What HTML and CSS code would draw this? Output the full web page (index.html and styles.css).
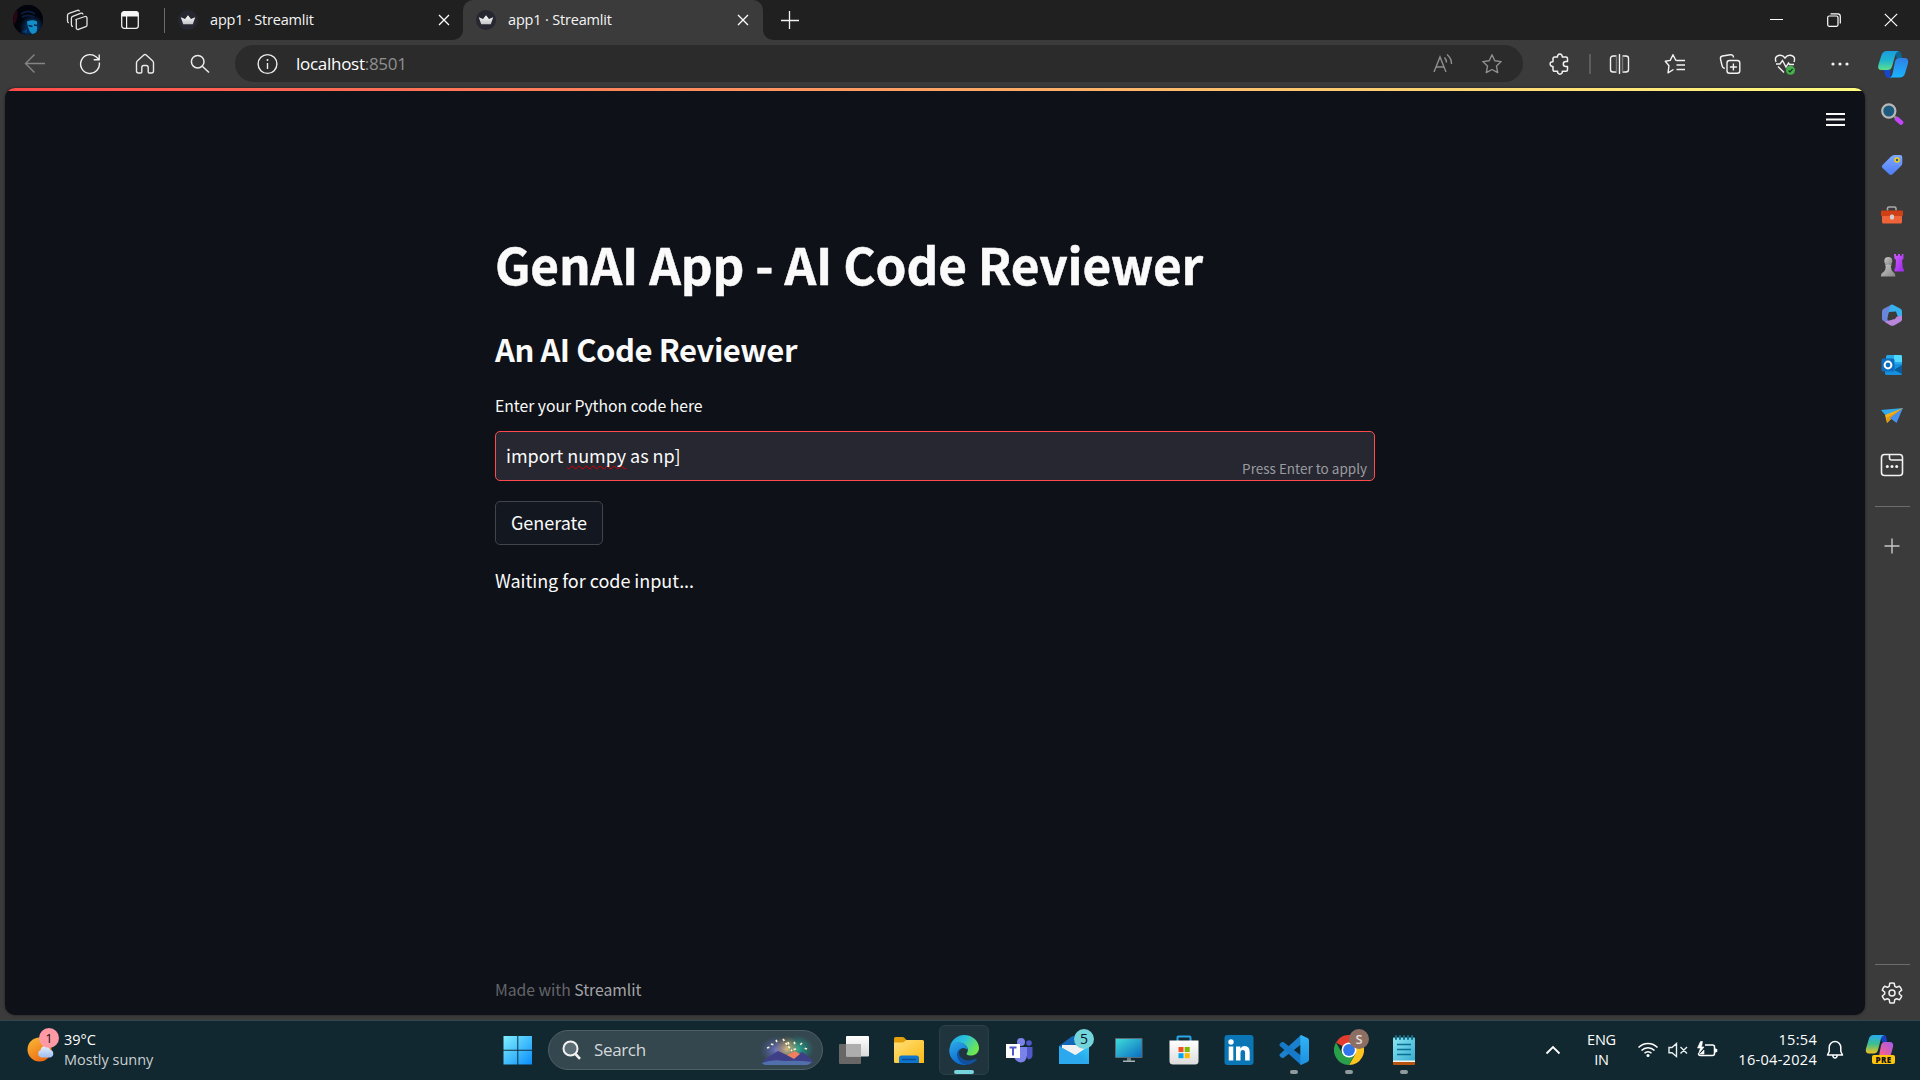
FILE: index.html
```html
<!DOCTYPE html>
<html lang="en">
<head>
<meta charset="utf-8">
<title>app1 · Streamlit</title>
<link rel="stylesheet" href="styles.css">
</head>
<body>
<svg class="defs" width="0" height="0">
  <defs>
    <linearGradient id="gWin" x1="0" y1="0" x2="1" y2="1"><stop offset="0" stop-color="#7ff0ff"/><stop offset="1" stop-color="#0a8dfa"/></linearGradient>
    <linearGradient id="gTeal" x1="0" y1="0" x2="0" y2="1"><stop offset="0" stop-color="#1b9de0"/><stop offset=".5" stop-color="#1fb5cf"/><stop offset="1" stop-color="#5fe08b"/></linearGradient>
    <linearGradient id="gBlue" x1="0" y1="0" x2="0" y2="1"><stop offset="0" stop-color="#2f80e6"/><stop offset="1" stop-color="#19b4ff"/></linearGradient>
    <linearGradient id="gSun" x1="0" y1="0" x2=".6" y2="1"><stop offset="0" stop-color="#f8bc35"/><stop offset="1" stop-color="#ee6c14"/></linearGradient>
    <linearGradient id="gCloud" x1="0" y1="0" x2="0" y2="1"><stop offset="0" stop-color="#e6effc"/><stop offset="1" stop-color="#9dbdf2"/></linearGradient>
    <linearGradient id="gFold" x1="0" y1="0" x2="1" y2="1"><stop offset="0" stop-color="#ffe07a"/><stop offset="1" stop-color="#fcb912"/></linearGradient>
    <linearGradient id="gTask" x1="0" y1="0" x2="0" y2="1"><stop offset="0" stop-color="#ffffff"/><stop offset="1" stop-color="#d9d9d9"/></linearGradient>
    <linearGradient id="gEdgeA" x1="0" y1="0" x2="1" y2=".5"><stop offset="0" stop-color="#1b9ee6"/><stop offset=".5" stop-color="#2cc2da"/><stop offset="1" stop-color="#6ee84e"/></linearGradient>
    <linearGradient id="gEdgeB" x1="0" y1="0" x2=".4" y2="1"><stop offset="0" stop-color="#2ea9ea"/><stop offset="1" stop-color="#0b6bcd"/></linearGradient>
    <linearGradient id="gMon" x1="0" y1="0" x2="1" y2="1"><stop offset="0" stop-color="#3ddcd8"/><stop offset="1" stop-color="#0c6cc4"/></linearGradient>
    <linearGradient id="gMail" x1="1" y1="0" x2="0" y2="1"><stop offset="0" stop-color="#36c6f6"/><stop offset="1" stop-color="#1a8de0"/></linearGradient>
    <linearGradient id="gNote" x1="0" y1="0" x2="1" y2="1"><stop offset="0" stop-color="#8be6f2"/><stop offset="1" stop-color="#35acd0"/></linearGradient>
    <linearGradient id="gStore" x1="0" y1="0" x2="0" y2="1"><stop offset="0" stop-color="#ffffff"/><stop offset="1" stop-color="#dcdcdc"/></linearGradient>
    <linearGradient id="gTag" x1="0" y1="0" x2="0" y2="1"><stop offset="0" stop-color="#7fa8ff"/><stop offset="1" stop-color="#4d7cf5"/></linearGradient>
    <linearGradient id="gPawn" x1="0" y1="0" x2="1" y2="1"><stop offset="0" stop-color="#c9c9c9"/><stop offset="1" stop-color="#858585"/></linearGradient>
    <linearGradient id="gRook" x1="0" y1="0" x2="1" y2="1"><stop offset="0" stop-color="#cf5cff"/><stop offset="1" stop-color="#9b27e8"/></linearGradient>
    <linearGradient id="gCpL" x1="0" y1="0" x2="0" y2="1"><stop offset="0" stop-color="#27a9f2"/><stop offset=".5" stop-color="#3fbf8b"/><stop offset="1" stop-color="#f2c11e"/></linearGradient>
    <linearGradient id="gCpR" x1="1" y1="0" x2="0" y2="1"><stop offset="0" stop-color="#a35bf0"/><stop offset=".6" stop-color="#ee5f98"/><stop offset="1" stop-color="#fb8a5c"/></linearGradient>
    <linearGradient id="gVs" x1="0" y1="0" x2="0" y2="1"><stop offset="0" stop-color="#32b5f6"/><stop offset="1" stop-color="#1d8fe0"/></linearGradient>
    <radialGradient id="gAvatar" cx=".64" cy=".75" r=".42"><stop offset="0" stop-color="#0b5f98"/><stop offset=".5" stop-color="#062a52"/><stop offset="1" stop-color="#02040c"/></radialGradient>
    <radialGradient id="gGlowL"><stop offset="0" stop-color="#6f7ad0" stop-opacity=".9"/><stop offset="1" stop-color="#5560b0" stop-opacity="0"/></radialGradient>
    <radialGradient id="gGlowR"><stop offset="0" stop-color="#23b39c" stop-opacity=".9"/><stop offset="1" stop-color="#1d9a8c" stop-opacity="0"/></radialGradient>
    <radialGradient id="gGlowC"><stop offset="0" stop-color="#f8cf8a" stop-opacity=".8"/><stop offset="1" stop-color="#d99a55" stop-opacity="0"/></radialGradient>
    <linearGradient id="gCrown" x1="0" y1="0" x2="0" y2="1"><stop offset="0" stop-color="#ffffff"/><stop offset="1" stop-color="#c4c4c8"/></linearGradient>
    <symbol id="favicon" viewBox="0 0 20 20"><circle cx="10" cy="10" r="10" fill="#262730"/><path d="M2.800 7.200 7 9l3-3.800L13 9l4.200-1.800-2.400 7H5.200z" fill="url(#gCrown)"/></symbol>
    <symbol id="close" viewBox="0 0 12 12"><path d="M1 1l10 10M11 1 1 11" stroke="#fff" stroke-width="1.300" fill="none"/></symbol>
  </defs>
</svg>

<div class="desktop">
  <header class="tabstrip">
    <div class="strip-left">
      <svg class="avatar" width="30" height="30"><circle cx="15" cy="15" r="15" fill="#03040d"/><circle cx="15" cy="15" r="15" fill="url(#gAvatar)"/><path d="M1 20A15 15 0 0 1 4 5q2 8-3 15z" fill="#3a0718" opacity=".7"/><path d="M8 9q7-5 14 0M9 12q6-3 12 0" stroke="#0a1c3c" stroke-width="2" fill="none"/><path d="M14 16.500q6-2.500 10 0v8q0 4-5 4.500-3-3-4-7z" fill="#128fc8"/><path d="M14 22q2 4 0 7l-5-2q3-2 5-5zM15.500 20.500l4 1M21 20l3 .5" fill="#073f86" stroke="#05284d" stroke-width="1.500"/></svg>
      <svg class="workspaces" width="22" height="22" fill="none" stroke="#e4e4e4" stroke-width="1.300"><path d="M10 10.500 19 7.500a1.500 1.500 0 0 1 2 1.400v7a1.800 1.800 0 0 1-1.200 1.700l-7.300 2.800a1.600 1.600 0 0 1-2.200-1.500v-7.200z"/><path d="M17 5.500A1.600 1.600 0 0 0 15 4.200L6.700 7.400A2 2 0 0 0 5.400 9v6.700q0 1.500 1.500 2"/><path d="M13.500 2.400a1.600 1.600 0 0 0-2-1L3 4.300A2 2 0 0 0 1.500 6.200V12q0 1.500 1.300 2"/></svg>
      <svg class="tab-actions" width="18" height="18"><rect x=".7" y=".7" width="16.600" height="16.600" rx="2.500" fill="none" stroke="#eee" stroke-width="1.300"/><path d="M.5 5.500V3A2.500 2.500 0 0 1 3 .5h12A2.500 2.500 0 0 1 17.500 3v2.500zM5 5h1.200v12.500H5z" fill="#f6f6f6"/></svg>
      <span class="strip-sep"></span>
      <div class="tab"><svg width="20" height="20"><use href="#favicon"/></svg><span class="tab-title">app1 · Streamlit</span><svg width="12" height="12"><use href="#close"/></svg></div>
    </div>
    <div class="tab tab-active"><svg width="20" height="20"><use href="#favicon"/></svg><span class="tab-title">app1 · Streamlit</span><svg width="12" height="12"><use href="#close"/></svg></div>
    <div class="strip-right">
      <svg width="18" height="18"><path d="M8.500 0v18M0 9.500h18" stroke="#f2f2f2" stroke-width="1.300"/></svg>
      <div class="window-buttons">
        <svg width="14" height="14"><path d="M0 6.500h13" stroke="#fff" stroke-width="1"/></svg>
        <svg width="14" height="14" fill="none" stroke="#fff" stroke-width="1.200"><rect x=".7" y="3" width="10.300" height="10.300" rx="1.500"/><path d="M3.500.8h7.200q2.600 0 2.600 2.600v7"/></svg>
        <svg width="14" height="14"><path d="M.8.8l12.400 12.400M13.200.8.8 13.200" stroke="#fff" stroke-width="1.200"/></svg>
      </div>
    </div>
  </header>

  <nav class="toolbar">
    <div class="nav-buttons">
      <svg width="22" height="22" fill="none" stroke="#858585" stroke-width="1.400"><path d="M21 10.500H1.500M10.500 1.500l-9 9 9 9"/></svg>
      <svg width="22" height="22" fill="none" stroke="#f2f2f2" stroke-width="1.400"><path d="M20.300 9.500A9.400 9.400 0 1 1 17 3.800L20 6.500M20.200 1.500v5.200h-5.500"/></svg>
      <svg width="22" height="22" fill="none" stroke="#ececec" stroke-width="1.400"><path d="M2.500 9.800Q2.500 8.500 3.500 7.700L9.800 2q1.200-1 2.400 0l6.300 5.700q1 .8 1 2.100V18a2 2 0 0 1-2 2h-2.300a1 1 0 0 1-1-1v-4.500a2 2 0 0 0-2-2h-2.400a2 2 0 0 0-2 2V19a1 1 0 0 1-1 1H4.500a2 2 0 0 1-2-2z"/></svg>
      <svg width="22" height="22" fill="none" stroke="#ececec" stroke-width="1.500"><circle cx="8.700" cy="8.700" r="6.300"/><path d="M13.300 13.300 20 19.500"/></svg>
    </div>
    <div class="address">
      <svg width="22" height="22"><circle cx="11.500" cy="11" r="9.400" fill="none" stroke="#ececec" stroke-width="1.400"/><path d="M11.500 10v6" stroke="#ececec" stroke-width="1.400"/><circle cx="11.500" cy="7" r="1" fill="#ececec"/></svg>
      <span class="url">localhost<span class="port">:8501</span></span>
      <svg class="read" width="22" height="22" fill="none" stroke="#8f8f8f" stroke-width="1.400"><path d="M2 19 8 4l6 15M4.200 14h7.700M12.500 4.500q2 2.200 2 5M15 1.500q4.700 4 4.500 9.500"/></svg>
      <svg width="22" height="22" fill="none" stroke="#8f8f8f" stroke-width="1.400" stroke-linejoin="round"><path d="m11 1.800 2.800 5.900 6.400.9-4.700 4.500 1.200 6.500L11 16.500l-5.700 3.100 1.200-6.500L1.800 8.600l6.400-.9z"/></svg>
    </div>
    <div class="tools">
      <svg width="22" height="22" fill="none" stroke="#f2f2f2" stroke-width="1.500" stroke-linejoin="round"><path d="M5.500 4h3a2.400 2.400 0 1 1 4.700 0H17a1.500 1.500 0 0 1 1.500 1.500v3h-1.700a2.500 2.500 0 0 0 0 5h1.700v3.300a1.500 1.500 0 0 1-1.500 1.500h-3.700a2.400 2.400 0 1 1-4.700 0h-3A1.500 1.500 0 0 1 4 16.800v-3.400a2.400 2.400 0 1 1 0-4.700V5.500A1.500 1.500 0 0 1 5.500 4z"/></svg>
      <span class="tool-sep"></span>
      <svg width="22" height="22" fill="none" stroke="#f2f2f2" stroke-width="1.400"><path d="M10.500 1v20M7.500 3H4A2.500 2.500 0 0 0 1.500 5.500v11A2.500 2.500 0 0 0 4 19h3.500M13.500 3H17a2.500 2.500 0 0 1 2.500 2.500v11A2.500 2.500 0 0 1 17 19h-3.500"/><path d="M7.500 3v16M13.500 3v16" stroke="#777"/></svg>
      <svg width="22" height="22" fill="none" stroke="#f2f2f2" stroke-width="1.400" stroke-linejoin="round"><path d="M13 7.500 11.800 7.300 9 1.700 6.200 7.400 1.300 8.300 5 12.700 4 19.800 9.500 16.500M13 7.500h8M12.500 12H21M12.500 16.500H21"/></svg>
      <svg width="22" height="22" fill="none" stroke="#f2f2f2" stroke-width="1.400"><rect x="8" y="7.500" width="12.800" height="12.800" rx="2.500"/><path d="M14.400 10.500v7M10.900 14h7M14.500 4.500q-.2-3-3.200-2.700L3.500 3Q1 3.600 1.500 6l1.500 6.500q.5 2.500 2.800 3"/></svg>
      <svg width="22" height="22" fill="none" stroke="#f2f2f2" stroke-width="1.400"><path d="M2 9Q.2 3.500 4.500 2.500 8.500 1.500 11 5q2.500-3.500 6.500-2.500Q21.800 3.500 20 9M2 11h4l2.500-3.500L12 14l2.500-4 1 1.500H20M4 13.500l6 6"/><circle cx="16.500" cy="17.300" r="4.500" fill="#45b04c" stroke="none"/><path d="m14.500 17.500 1.500 1.400 2.600-3" stroke="#12351a" stroke-width="1.200"/></svg>
      <svg width="22" height="22" fill="#f2f2f2"><circle cx="4" cy="11" r="1.600"/><circle cx="11" cy="11" r="1.600"/><circle cx="18" cy="11" r="1.600"/></svg>
    </div>
    <svg class="copilot" width="32" height="30"><path d="M18 2h3q2.500 0 3.200 3l1 4h-5.500z" fill="#0c6690"/><path d="M9 21l3.500 7.500h3q-4-3-3-7.500z" fill="#1838c0"/><path d="M13 28.500h-2Q8.500 28.500 8 25.500L7 21h6.500z" fill="#1846d0"/><path d="M10 2h12.500q-3 0-4 3.500L15 17.500q-1 3.500-4.500 3.500H4.500Q0 21 1.500 15.500L4.500 6Q6 2 10 2z" fill="url(#gTeal)"/><path d="M22 9h5.500q4.500 0 3.500 5.500L28 24.500q-1.300 4-5.500 4H11.500q3 0 4-3.500L18 12.500Q18.900 9 22 9z" fill="url(#gBlue)"/></svg>
  </nav>

  <div class="workspace">
    <main class="page">
      <div class="page-menu"><svg width="19" height="15" stroke="#fafafa" stroke-width="2"><path d="M0 2h19M0 7.500h19M0 13h19"/></svg></div>
      <section class="content">
        <h1>GenAI App - AI Code Reviewer</h1>
        <h2>An AI Code Reviewer</h2>
        <label class="field-label">Enter your Python code here</label>
        <div class="field"><span class="field-text">import <span class="typo">numpy</span> as np]</span><span class="hint">Press Enter to apply</span></div>
        <button class="generate" type="button">Generate</button>
        <p class="status">Waiting for code input...</p>
      </section>
      <footer class="made">Made with <a>Streamlit</a></footer>
    </main>
    <aside class="sidebar">
      <svg width="24" height="24"><path d="m17 17 4 3.500" stroke="#c545fa" stroke-width="4.600" stroke-linecap="round"/><path d="m14 14 2 2" stroke="#888" stroke-width="2.500"/><circle cx="8.800" cy="9" r="6.600" fill="#1c5b7d" stroke="#b7b7b7" stroke-width="2.200"/></svg>
      <svg width="24" height="24"><path d="M11 4.500Q12.500 3 14.500 3H20a2.300 2.300 0 0 1 2.300 2.300V11q0 2-1.500 3.300l-8.300 8q-1.700 1.600-3.300 0L2.500 16Q1 14.300 2.500 13z" fill="url(#gTag)"/><circle cx="17" cy="8" r="2" fill="#2854a8" stroke="#ffd000" stroke-width="1.500"/></svg>
      <svg width="24" height="24"><path d="M7.500 8.500v-2q0-1.500 1.500-1.500h5.500q1.500 0 1.500 1.500v2" fill="none" stroke="#aaa" stroke-width="1.600"/><rect x="1" y="8.500" width="22" height="5.500" rx="1" fill="#cf4016"/><path d="M2 14h20v6a1.500 1.500 0 0 1-1.500 1.500h-17A1.500 1.500 0 0 1 2 20z" fill="#ef6339"/><rect x="10" y="12.500" width="4" height="5" rx="1.500" fill="#d0d0d0"/></svg>
      <svg width="24" height="24"><path d="M14 1h2v1.800h2V1h2v1.800h1.800V1H23.500v5L22 7l.8 8 1.200 1.500v2h-9.500V16l1-1.500.5-7.500-1.500-1.500z" fill="url(#gRook)"/><circle cx="8.300" cy="8" r="4" fill="url(#gPawn)"/><path d="M4.800 11.500h7l-1 2q.5 4 2.200 5.500 2.500 1 2.300 4.500H1q-.2-3.500 2.600-4.500 2-1.500 2.200-5.500z" fill="url(#gPawn)"/></svg>
      <svg width="24" height="24"><path d="M11.500 1.800 4 5.500Q2 6.500 2 8.500v7.200q0 2 1.800 2.300l4.700.5q-1.500-1-1-3.500l2-8z" fill="#6a86da"/><path d="M10.500 2q1.500-.8 3 0l7 3.800Q22 6.600 22 8.300V16l-4.500-3-1.500-4.500L8.500 9z" fill="#37b0ee"/><path d="M22 12.500v4q0 1.500-1.500 2.300L14 22.400q-1.700.9-3.500 0L4 18.500l7.500-1.500 5.500-3.500z" fill="#ba86dc"/><path d="M9.800 9h5l2.400 3.700-2.400 3.600h-5L7.800 12.700z" fill="#3b3b3b"/></svg>
      <svg width="24" height="24"><rect x="6" y="2" width="16" height="14" rx="1.500" fill="#28a8e8"/><path d="M14 2h6.500A1.500 1.500 0 0 1 22 3.500V9h-8z" fill="#50d9ff"/><path d="M5 11h17v9.500a1.500 1.500 0 0 1-1.500 1.500h-14A1.500 1.500 0 0 1 5 20.500z" fill="#1490df"/><path d="m22 12-8 5 8 4z" fill="#0a5b9a"/><rect x="1.500" y="5.500" width="13" height="13" rx="1.500" fill="#0f6cbd"/><circle cx="8" cy="12" r="3.400" fill="none" stroke="#fff" stroke-width="2"/></svg>
      <svg width="24" height="24"><path d="M1 7 23 5 7 14z" fill="#32a8ec"/><path d="M23 5 5 12l2 8 4-4z" fill="#f4b01c"/><path d="M23 5 11 16l-4 4-.5-5z" fill="#e09a12"/><path d="m23 5-13 10 6.500 5z" fill="#4590f0"/></svg>
      <svg width="24" height="24" fill="none" stroke="#f2f2f2" stroke-width="1.600"><rect x="1.500" y="1.500" width="21" height="21" rx="3"/><path d="M9.500 2v3a2 2 0 0 0 2 2H22"/><g fill="#f2f2f2" stroke="none"><circle cx="7.300" cy="13.500" r="1.500"/><circle cx="12" cy="13.500" r="1.500"/><circle cx="16.700" cy="13.500" r="1.500"/></g></svg>
      <span class="side-line"></span>
      <svg class="side-add" width="16" height="16"><path d="M8 .5v15M.5 8h15" stroke="#c8c8c8" stroke-width="1.400"/></svg>
      <span class="side-line side-line-low"></span>
      <svg class="side-gear" width="24" height="24" fill="none" stroke="#f2f2f2" stroke-width="1.500" stroke-linejoin="round"><path d="M9.800 2.200q2.200-.5 4.400 0l.6 3.100 1.700 1 3-1q1.600 1.700 2.200 3.800L19.300 11v2l2.400 2q-.6 2.100-2.200 3.700l-3-1-1.700 1-.6 3.100q-2.200.5-4.400 0l-.6-3.100-1.700-1-3 1Q2.900 17 2.300 15l2.400-2v-2L2.300 9.100q.6-2.100 2.200-3.800l3 1 1.700-1z"/><circle cx="12" cy="12" r="3"/></svg>
    </aside>
  </div>

  <div class="taskbar">
    <div class="weather">
      <span class="weather-icon"><svg width="29" height="26"><circle cx="12.500" cy="12.500" r="12" fill="url(#gSun)"/><path d="M14 20.500a4 4 0 0 1-.5-7.500q.8-4 5-4 3.700 0 4.700 3.800a4 4 0 0 1 .3 7.700z" fill="url(#gCloud)"/></svg><span class="weather-badge">1</span></span>
      <span class="weather-text"><span>39°C</span><span class="dim">Mostly sunny</span></span>
    </div>
    <div class="apps">
      <span class="app"><svg width="30" height="30" fill="url(#gWin)"><path d="M.5 1h28.500v28.500H.5z"/><path d="M14.300 0h1v30h-1zM0 14.800h30v1H0z" fill="#12303a"/></svg></span>
      <div class="search">
        <svg width="20" height="20" fill="#5b6c74" stroke="#f2f2f2" stroke-width="2"><circle cx="8.500" cy="8.500" r="7"/><path d="m13.500 14 4.500 4.800" stroke-width="2.600"/></svg>
        <span>Search</span>
        <svg class="search-art" width="54" height="32"><ellipse cx="16" cy="16" rx="16" ry="14" fill="url(#gGlowL)"/><ellipse cx="38" cy="15" rx="16" ry="14" fill="url(#gGlowR)"/><ellipse cx="27" cy="15" rx="13" ry="13" fill="url(#gGlowC)"/><path d="M2 29q1-3 5-5l11-7 15 7 9-6 8 6q3 2 3 5z" fill="#3e3f87"/><path d="m27 21 7 4 6-5-5-3z" fill="#ee8060"/><path d="M2 29q10-4 22-2 15-1 28 1-3 3-5 3H6q-3 0-4-2z" fill="#5170ab"/><path d="m23 5 2 3 3 4 4 5M7 14l3-1M11 10l3 1M16 6l1 2M34 8l1 2M42 9l-2 2M47 15l-3-1M36 15l-4 1M28 8l1 3" stroke="#fff3cf" stroke-width="1.700" stroke-dasharray="2.500 2"/></svg>
      </div>
      <span class="app"><svg width="30" height="28"><rect x="0" y="8" width="22" height="20" rx="1" fill="#676767"/><rect x="7" y="0" width="23" height="20.500" rx="1" fill="url(#gTask)"/><path d="M7 8h15v12.500H8q-1 0-1-1z" fill="#adadad"/></svg></span>
      <span class="app"><svg width="30" height="28"><path d="M0 2.500Q0 1 1.500 1h7q1 0 1.800.8L13 4.500V9H0z" fill="#e3a00a"/><path d="M0 6.500h9l3.500-2.500H28.500A1.500 1.500 0 0 1 30 5.500V27H1.500A1.500 1.500 0 0 1 0 25.500z" fill="url(#gFold)"/><path d="M5 27V22q0-2.500 2.500-2.500h15Q25 19.500 25 22v5z" fill="#0f76cf"/><path d="M8.500 23.500h13" stroke="#0a4c91" stroke-width="1.400" stroke-linecap="round"/></svg></span>
      <span class="app app-current"><svg width="30" height="30"><path d="M.8 13A14.500 14.500 0 0 1 15 0c9 0 15 6.500 15 13 0 5-4 7.500-8 7.500s-5-1.500-4-2.800q1.200-1.500.8-3.500C18 10 13 7 8.500 7.500Q3 8.500.8 13z" fill="url(#gEdgeA)"/><path d="M.3 15C.8 9 6 6.500 10 7.200c5 .6 8.800 4 8.600 7.500q-5-3.500-8.300.5C7 20 10 27 18 29.700Q9.500 31 4 25 0 20.500.3 15z" fill="url(#gEdgeB)"/><path d="M12 13.500Q8 18 12 22.500q5 5 14 1.500 2-.8 2 .4C25 28.500 19 30.500 15 29.300 9 27 6.500 20 9 16q1.300-2 3-2.500z" fill="#11509c"/></svg><i class="run run-wide"></i></span>
      <span class="app"><svg width="28" height="26"><circle cx="16" cy="5" r="4" fill="#7b83eb"/><circle cx="24" cy="6" r="2.800" fill="#5059c9"/><path d="M18 10h9.500v8q0 4-4.500 4.500z" fill="#5059c9"/><path d="M9 10h13v8.500Q21.500 25 15.500 25.500 11 25 9 20z" fill="#7b83eb"/><rect x="1" y="7" width="14" height="14" fill="#fff"/><path d="M4.500 10.500h7M8 10.500v8" stroke="#5059c9" stroke-width="2"/></svg></span>
      <span class="app"><svg width="30" height="28"><path d="m0 10 12-9q3-2 6 0l12 9v5H0z" fill="#1466b8"/><path d="M3 9h24v9l-12 5L3 18z" fill="#f1f1f1"/><path d="m30 10-15 10L0 28h30z" fill="url(#gMail)"/><path d="m0 10 18 10 12 8H0z" fill="#2ba8ee"/></svg><b class="badge badge-mail">5</b></span>
      <span class="app"><svg width="28" height="26"><rect x="0" y="1" width="27.500" height="20" rx="1" fill="#596e77"/><rect x="1" y="2" width="25.500" height="18" fill="url(#gMon)"/><path d="M12 21h4v3h-4z" fill="#6d7a80"/><path d="M8 23.500h12V25H8z" fill="#a9b1b5"/></svg></span>
      <span class="app"><svg width="30" height="30"><path d="M8.500 7V2.500Q8.500 1.500 9.500 1.500h11q1 0 1 1V7" fill="none" stroke="#28a8ea" stroke-width="1.900"/><path d="M.5 5.500h29V26q0 3.500-3.500 3.500H4Q.5 29.500.5 26z" fill="url(#gStore)"/><path d="M9.500 12h5v5h-5z" fill="#f25022"/><path d="M15.700 12h5v5h-5z" fill="#7fba00"/><path d="M9.500 18.200h5v5h-5z" fill="#00a4ef"/><path d="M15.700 18.200h5v5h-5z" fill="#ffb900"/></svg></span>
      <span class="app"><svg width="30" height="30"><rect x=".5" width="29" height="30" rx="3" fill="#0a76b5"/><circle cx="7" cy="7" r="2.700" fill="#fff"/><path d="M4.700 11.500h4.600v14H4.700zM12 11.500h4.400v2q1.500-2.400 4.300-2.400 5 0 5 6.100v8.300h-4.600v-7.300q0-3.100-2.200-3.100-2.400 0-2.400 3.200v7.200H12z" fill="#fff"/></svg></span>
      <span class="app"><svg width="30" height="30"><path d="M22 0 1.500 18.500q-2 1.500-.3 3l1.300 1.200q1 .8 2.200 0L24 8z" fill="#1b80cd"/><path d="M22 30 1.500 11.500q-2-1.500-.3-3L2.500 7.300q1-.8 2.200 0L24 22z" fill="#177ac8"/><path d="m22 0 6.500 3Q30 3.800 30 5.500v19q0 1.700-1.500 2.500L22 30q-.7-.2-.7-1.500v-27Q21.300.3 22 0z" fill="url(#gVs)"/></svg><i class="run"></i></span>
      <span class="app"><svg width="30" height="30"><path d="M15 15 2 7.500A15 15 0 0 1 28 7.500H15z" fill="#e33b2e"/><path d="M28 7.500A15 15 0 0 1 15 30l6.500-11.200L21 7.500z" fill="#fdc420"/><path d="M15 30A15 15 0 0 1 2 7.500l6.500 11.200h13z" fill="#2a9f49"/><circle cx="15" cy="15" r="7.500" fill="#fff"/><circle cx="15" cy="15" r="5.900" fill="#2f75ec"/></svg><b class="badge badge-chrome">S</b><i class="run"></i></span>
      <span class="app"><svg width="24" height="30"><path d="M1 3.500q0-1 1-1h20q1 0 1 1V27H1z" fill="url(#gNote)"/><path d="M1 25.500h22V27H1z" fill="#f3f3f3"/><path d="M1 27h22v2q0 1-1 1H2q-1 0-1-1z" fill="#b4540f"/><path d="M5 9.500h14M5 14.500h14M5 19.500h14" stroke="#0b6f92" stroke-width="1.700"/><path d="M4 1v3M8 1v3M12 1v3M16 1v3M20 1v3" stroke="#136d87" stroke-width="2" stroke-linecap="round"/></svg><i class="run"></i></span>
    </div>
    <div class="tray">
      <svg width="16" height="10"><path d="m1.500 8.500 6.500-6.500 6.500 6.500" fill="none" stroke="#fff" stroke-width="1.800"/></svg>
      <span class="lang"><span>ENG</span><span>IN</span></span>
      <svg class="wifi" width="22" height="18" fill="none" stroke="#fff" stroke-width="1.500"><path d="M1.500 6.500a13.200 13.200 0 0 1 19 0M4.500 9.500a9 9 0 0 1 13 0M7.500 12.300a5 5 0 0 1 7 0"/><circle cx="11" cy="14.500" r="1.500" fill="#fff" stroke="none"/></svg>
      <svg class="vol" width="20" height="16" fill="none" stroke="#e9eef0" stroke-width="1.400"><path d="M1 5.500h3L8.500 1.500v13L4 10.800H1zM12.500 5l6.500 6.500M19 5l-6.500 6.500"/></svg>
      <svg class="bat" width="22" height="18" fill="none" stroke="#fff" stroke-width="1.500"><path d="M9 4h7.500q2 0 2 2v6.500q0 2-2 2h-12q-2 0-2-2"/><path d="M19.500 7.500v4M20.500 8v3"/><path d="M4.500.5 1.500 7h3L2.500 13l5.500-7H5.500L6.500.5zM4 13l4-4v4z" fill="#fff" stroke-width=".6"/></svg>
      <span class="clock"><span>15:54</span><span>16-04-2024</span></span>
      <svg class="bell" width="18" height="20" fill="none" stroke="#fff" stroke-width="1.500" stroke-linejoin="round"><path d="M9 1.500a5.800 5.800 0 0 1 5.800 5.800v4.200l1.700 3.500H1.500l1.700-3.500V7.300A5.800 5.800 0 0 1 9 1.500zM6.800 15.500q.3 2.500 2.200 2.500t2.200-2.500"/></svg>
      <span class="pre"><svg width="30" height="26"><path d="M15 0h3.500Q21 0 21.500 3l.7 4h-5z" fill="#1a3fc0"/><path d="M8.500 0H20q-3 0-4 3.500L13 15q-1 3.500-4.500 3.500H4Q0 18.500 1 13.500L4 3.500Q5 0 8.500 0z" fill="url(#gCpL)"/><path d="M19.500 7h5q4.500 0 3.500 5l-2.500 9q-1 4-5 4H9.500q3.500 0 4.500-4l2-10.500Q16.800 7 19.500 7z" fill="url(#gCpR)"/></svg><em>PRE</em></span>
    </div>
  </div>
</div>
</body>
</html>
```
FILE: styles.css
```css
* { box-sizing: border-box; }
body { margin: 0; overflow: hidden; background: #3b3b3b; color: #fff; font-family: "Open Sans", "Noto Sans", sans-serif; }
svg { display: block; flex: none; }
.defs { position: absolute; }
.desktop { width: 1920px; height: 1080px; display: flex; flex-direction: column; }

/* tab strip */
.tabstrip { flex: none; height: 40px; display: flex; background: linear-gradient(#202020 50%, #3b3b3b 50%); }
.strip-left { width: 463px; display: flex; align-items: center; background: #202020; border-bottom-right-radius: 10px; padding-left: 13px; }
.workspaces { margin-left: 23px; }
.tab-actions { margin-left: 33px; }
.strip-sep { width: 1px; height: 25px; margin-left: 25px; background: #6b6b6b; }
.tab { display: flex; align-items: center; flex: 1; padding: 0 13px; }
.tab-title { flex: 1; margin-left: 12px; font-size: 14.5px; line-height: 20px; letter-spacing: -.18px; color: #f4f4f4; white-space: nowrap; }
.tab-active { flex: none; width: 300px; padding: 0 14px 0 13px; background: #3b3b3b; border-radius: 10px 10px 0 0; }
.strip-right { flex: 1; display: flex; justify-content: space-between; align-items: center; background: #202020; border-bottom-left-radius: 10px; padding: 0 22px 0 18px; }
.window-buttons { display: flex; gap: 43px; }

/* toolbar */
.toolbar { flex: none; height: 48px; display: flex; align-items: center; }
.nav-buttons { display: flex; gap: 33px; padding-left: 24px; width: 235px; }
.address { width: 1288px; height: 37px; margin-bottom: 1px; border-radius: 19px; background: #2b2b2b; display: flex; align-items: center; padding: 0 20px 0 21px; }
.url { flex: 1; margin-left: 18px; font-size: 17px; line-height: 24px; letter-spacing: -.28px; }
.port { color: #8f8f8f; }
.read { margin-right: 27px; }
.tools { display: flex; align-items: center; gap: 33px; margin-left: 26px; }
.tool-sep { width: 2px; height: 20px; margin: 0 -15px 0 -15px; background: #5d5d5d; }
.copilot { margin-left: 26px; }

/* workspace */
.workspace { flex: none; height: 932px; display: flex; padding: 0 0 5px 5px; }
.page { width: 1860px; height: 927px; border-radius: 10px; overflow: hidden; background: #0e1117; display: flex; flex-direction: column; box-shadow: 0 0 3px #0007; font-family: "Noto Sans CJK SC", "Noto Sans CJK JP", sans-serif; color: #fafafa; }
.page::before { content: ""; height: 3px; background: linear-gradient(90deg, #ff4b4b, #fffd80); flex: none; }
.page-menu { flex: none; height: 57px; padding: 21px 20px 0; display: flex; justify-content: flex-end; }
.content { width: 880px; margin-left: 490px; display: flex; flex-direction: column; align-items: flex-start; }
h1 { margin: 83px 0 0; font-size: 49.5px; line-height: 66px; letter-spacing: -.17px; font-weight: 700; white-space: nowrap; -webkit-text-stroke: .5px #fafafa; }
h2 { margin: 31px 0 0; font-size: 31px; line-height: 42px; letter-spacing: -.45px; font-weight: 700; }
.field-label { margin-top: 22px; font-size: 15.75px; line-height: 28px; letter-spacing: -.03px; }
.field { width: 880px; height: 50px; margin-top: 11px; border: 1px solid #ff4b4b; border-radius: 5px; background: #262730; display: flex; justify-content: space-between; padding: 0 7px 0 10px; }
.field-text { font-size: 18px; line-height: 47px; letter-spacing: -.04px; white-space: pre; }
.typo { text-decoration: underline wavy #d60000 1px; text-underline-offset: 2px; text-decoration-skip-ink: none; }
.hint { align-self: flex-end; font-size: 13.5px; line-height: 23px; color: #9a9ba0; }
.generate { height: 44px; width: 108px; margin-top: 20px; padding: 0 0 3px; border: 1px solid #41444c; border-radius: 5px; background: #131720; color: #fafafa; font: 18px/38px "Noto Sans CJK SC", sans-serif; }
.status { margin: 19px 0 0; font-size: 18px; line-height: 32px; letter-spacing: -.03px; }
.made { margin: auto 0 11px 490px; font-size: 15.75px; line-height: 28px; letter-spacing: -.04px; color: #63656b; }
.made a { color: #a3a4a8; }

/* sidebar */
.sidebar { width: 54px; height: 932px; display: flex; flex-direction: column; align-items: center; gap: 26.2px; padding-top: 14px; }
.side-line { width: 35px; height: 1px; background: #6c6c6c; margin-top: 2px; flex: none; }
.side-add { margin-top: 5px; }
.side-line-low { margin-top: auto; }
.side-gear { margin: -10px 0 15px; }

/* taskbar */
.taskbar { flex: none; height: 60px; border-top: 1px solid #34464d; background: #122830; display: flex; align-items: center; padding-bottom: 1px; }
.weather { display: flex; width: 490px; padding-left: 27px; align-items: center; gap: 8px; }
.weather-icon { position: relative; }
.weather-badge { position: absolute; left: 12px; top: -9px; width: 20px; height: 20px; border-radius: 50%; background: #ff99a4; color: #111; font-size: 13px; line-height: 20px; text-align: center; }
.weather-text, .lang, .clock { display: flex; flex-direction: column; font-size: 14.5px; line-height: 20px; white-space: nowrap; padding-bottom: 1px; }
.dim { color: #c9d0d3; }
.apps { display: flex; align-items: center; height: 58px; }
.app { width: 55px; height: 50px; display: flex; align-items: center; justify-content: center; position: relative; }
.search { width: 275px; height: 40px; margin: 0 3px; border-radius: 20px; border: 1px solid #4f5f66; background: #34464e; display: flex; align-items: center; padding: 0 8px 0 13px; color: #d4d9db; font-size: 17px; line-height: 24px; letter-spacing: -.35px; gap: 12px; }
.search-art { margin-left: auto; }
.app-current { width: 50px; margin: 0 2.5px; background: #1f343c; border: 1px solid #2b3f47; border-radius: 6px; }
.run { position: absolute; left: 50%; bottom: 1px; width: 8px; height: 4px; margin-left: -4px; border-radius: 2px; background: #8f9a9e; }
.run-wide { width: 20px; margin-left: -10px; bottom: 0; background: #76d5dc; }
.badge { position: absolute; left: 28px; top: 4px; width: 20px; height: 20px; border-radius: 50%; text-align: center; font-size: 14px; line-height: 20px; font-weight: 400; }
.badge-mail { background: #74d4db; color: #0a1a1e; }
.badge-chrome { background: #8d6e63; color: #e4dcd9; font-weight: 600; font-size: 13px; }
.tray { display: flex; align-items: center; width: 375px; margin-left: auto; }
.lang { margin-left: 26px; width: 29px; align-items: center; letter-spacing: -.2px; }
.wifi { margin-left: 21px; }
.vol { margin-left: 9px; }
.bat { margin-left: 8px; }
.clock { width: 99px; align-items: flex-end; letter-spacing: .3px; }
.bell { margin-left: 9px; }
.pre { margin-left: 21px; height: 30px; position: relative; }
.pre em { position: absolute; left: 7px; top: 20px; width: 23px; height: 9px; border-radius: 2px; background: #ffc40c; color: #111; font: 800 8px/9px "Open Sans", sans-serif; text-align: center; letter-spacing: .3px; }
```
